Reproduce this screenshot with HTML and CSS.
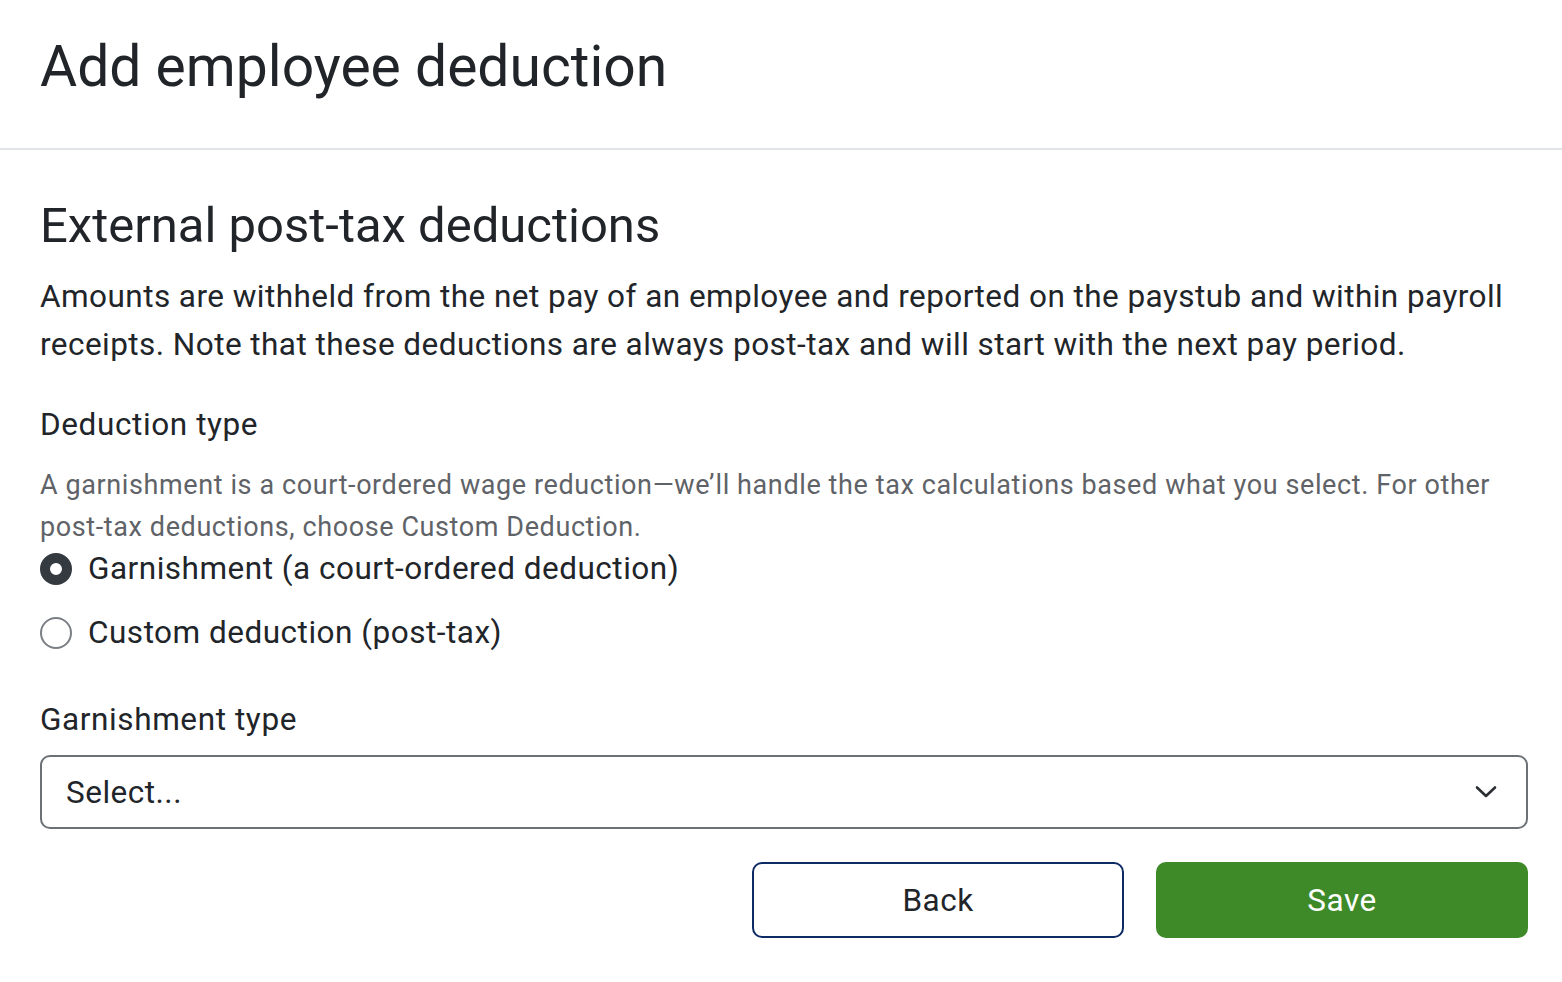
FILE: index.html
```html
<!DOCTYPE html>
<html lang="en">
<head>
<meta charset="utf-8">
<title>Add employee deduction</title>
<link rel="stylesheet" href="styles.css">
</head>
<body>
<header class="page-header">
  <h1 class="page-title">Add employee deduction</h1>
</header>
<main class="content">
  <h2 class="section-title">External post-tax deductions</h2>
  <p class="intro">Amounts are withheld from the net pay of an employee and reported on the paystub and within payroll receipts. Note that these deductions are always post-tax and will start with the next pay period.</p>

  <fieldset class="field">
    <legend class="field-label">Deduction type</legend>
    <p class="hint">A garnishment is a court-ordered wage reduction—we’ll handle the tax calculations based what you select. For other <span class="nowrap">post-tax</span> deductions, choose Custom Deduction.</p>
    <div class="radio-list">
      <label class="radio-row">
        <span class="radio radio-checked"></span>
        <span class="radio-text">Garnishment (a court-ordered deduction)</span>
      </label>
      <label class="radio-row">
        <span class="radio"></span>
        <span class="radio-text">Custom deduction (post-tax)</span>
      </label>
    </div>
  </fieldset>

  <div class="field select-field">
    <div class="field-label">Garnishment type</div>
    <div class="select">
      <span class="select-value">Select...</span>
      <svg class="chevron" width="24" height="14" viewBox="0 0 24 14" aria-hidden="true">
        <path d="M3 2.5 L12 11 L21 2.5" fill="none" stroke="#2b2f33" stroke-width="2.6" stroke-linecap="round" stroke-linejoin="round"/>
      </svg>
    </div>
  </div>

  <div class="actions">
    <button class="btn btn-secondary" type="button">Back</button>
    <button class="btn btn-primary" type="button">Save</button>
  </div>
</main>
</body>
</html>
```

FILE: styles.css
```css
* { box-sizing: border-box; }

body {
  margin: 0;
  background: #ffffff;
  color: #212529;
  font-family: Roboto, "Liberation Sans", sans-serif;
}

.page-header {
  padding: 32px 40px 46px;
  border-bottom: 2px solid #e1e4e8;
}

.page-title {
  margin: 0;
  font-size: 57px;
  line-height: 70px;
  font-weight: 400;
}

.content {
  padding: 48px 34px 0 40px;
}

.section-title {
  margin: 0;
  font-size: 49px;
  line-height: 56px;
  font-weight: 400;
}

.intro {
  margin: 19px 0 0;
  font-size: 31.5px;
  letter-spacing: 0.45px;
  line-height: 48px;
}

.field {
  margin: 36px 0 0;
  padding: 0;
  border: 0;
  min-width: 0;
}

.field-label {
  padding: 0;
  font-size: 31.5px;
  letter-spacing: 0.6px;
  line-height: 40px;
}

.hint {
  margin: 19px 0 0;
  font-size: 27px;
  letter-spacing: 0.6px;
  line-height: 42px;
  color: #5f6368;
}

.nowrap { white-space: nowrap; }

.radio-list {
  margin-top: -1px;
  display: flex;
  flex-direction: column;
  gap: 20px;
}

.radio-row {
  display: flex;
  align-items: center;
  gap: 16px;
  height: 44px;
}

.radio {
  width: 32px;
  height: 32px;
  border-radius: 50%;
  border: 2px solid #7a7f85;
  background: #fff;
  flex: none;
}

.radio-checked {
  border: 10px solid #343a40;
  background: #fff;
}

.radio-text {
  font-size: 31.5px;
  letter-spacing: 0.5px;
  line-height: 44px;
}

.select-field {
  margin-top: 45px;
}

.select {
  margin-top: 15px;
  height: 74px;
  border: 2px solid #6c7178;
  border-radius: 10px;
  display: flex;
  align-items: center;
  justify-content: space-between;
  padding: 0 28px 0 24px;
}

.select-value {
  font-size: 31.5px;
  letter-spacing: 0.5px;
}

.chevron { display: block; }

.actions {
  margin-top: 33px;
  display: flex;
  justify-content: flex-end;
  gap: 32px;
}

.btn {
  width: 372px;
  height: 76px;
  border-radius: 10px;
  font-family: Roboto, "Liberation Sans", sans-serif;
  font-size: 31.5px;
  letter-spacing: 0.5px;
  cursor: pointer;
}

.btn-secondary {
  background: #fff;
  border: 2px solid #0d2a63;
  color: #212529;
}

.btn-primary {
  background: #3e8a29;
  border: 2px solid #3e8a29;
  color: #fff;
}
```
